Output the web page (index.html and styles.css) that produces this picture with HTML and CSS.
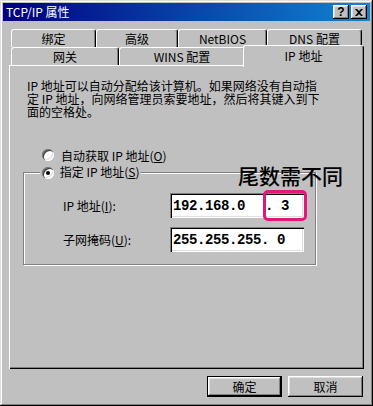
FILE: index.html
```html
<!DOCTYPE html>
<html lang="zh-CN">
  <head>
    <meta charset="UTF-8" />
    <title>TCP/IP 属性</title>
    <link rel="stylesheet" href="styles.css">
  </head>
  <body>
    <div class="window">
      <div class="titlebar">
        <span class="title">TCP/IP 属性</span>
        <div class="title-buttons">
          <span class="tbtn help">?</span>
          <span class="tbtn close">
            <svg width="8" height="7" viewBox="0 0 8 7">
              <path d="M0 0h2l2 2 2-2h2L5 3.5 8 7H6L4 5 2 7H0l3-3.5z" fill="#000" />
            </svg>
          </span>
        </div>
      </div>

      <div class="tabs">
        <div class="tab-row">
          <div class="tab t-bind">绑定</div>
          <div class="tab t-adv">高级</div>
          <div class="tab t-netbios">NetBIOS</div>
          <div class="tab t-dns">DNS 配置</div>
        </div>
        <div class="tab-row">
          <div class="tab t-gate">网关</div>
          <div class="tab t-wins">WINS 配置</div>
          <div class="tab t-ip active">IP 地址</div>
        </div>
      </div>

      <div class="panel">
        <p class="desc">IP 地址可以自动分配给该计算机。如果网络没有自动指<br>定 IP 地址，向网络管理员索要地址，然后将其键入到下<br>面的空格处。</p>

        <div class="radio-row">
          <span class="radio"></span>
          <span>自动获取 IP 地址(<u>O</u>)</span>
        </div>

        <fieldset class="group">
          <legend>
            <span class="radio checked"></span>
            <span>指定 IP 地址(<u>S</u>)</span>
          </legend>
          <div class="group-body">
            <div class="field-row">
              <span class="field-label">IP 地址(<u>I</u>):</span>
              <div class="ipbox">
                <span class="ip-text">192.168.0</span>
                <span class="ip-text last">. 3</span>
                <span class="mark"></span>
              </div>
            </div>
            <div class="field-row">
              <span class="field-label">子网掩码(<u>U</u>):</span>
              <div class="ipbox">
                <span class="ip-text">255.255.255. 0</span>
              </div>
            </div>
          </div>
        </fieldset>

        <div class="note">尾数需不同</div>
      </div>

      <div class="buttons">
        <button class="btn default">确定</button>
        <button class="btn">取消</button>
      </div>
    </div>
  </body>
</html>
```

FILE: styles.css
```css
* {
  box-sizing: border-box;
}

body {
  margin: 0;
  background-color: #c0c0c0;
  font-family: "Noto Sans CJK SC", sans-serif;
  font-size: 12px;
  color: #000;
}

.window {
  width: 373px;
  height: 406px;
  padding: 3px;
  display: flex;
  flex-direction: column;
  background-color: #c0c0c0;
  box-shadow: inset -1px -1px #000, inset 1px 1px #dfdfdf,
    inset -2px -2px #808080, inset 2px 2px #fff;
}

.titlebar {
  height: 18px;
  flex-shrink: 0;
  display: flex;
  align-items: center;
  justify-content: space-between;
  padding: 0 3px 0 3px;
  background: linear-gradient(to right, #000080, #1084d0);
  color: #fff;
}

.title {
  line-height: 18px;
}

.title-buttons {
  display: flex;
  gap: 2px;
}

.tbtn {
  width: 16px;
  height: 14px;
  display: flex;
  align-items: center;
  justify-content: center;
  background-color: #c0c0c0;
  color: #000;
  font-family: "Liberation Sans", sans-serif;
  font-weight: bold;
  font-size: 12px;
  box-shadow: inset -1px -1px #000, inset 1px 1px #fff,
    inset -2px -2px #808080, inset 2px 2px #dfdfdf;
}

/* tabs */

.tabs {
  margin: 8px 0 0 8px;
  position: relative;
  z-index: 1;
}

.tab-row {
  display: flex;
  height: 18px;
}

.tab {
  height: 18px;
  display: flex;
  align-items: center;
  justify-content: center;
  background-color: #c0c0c0;
  border: 1px solid;
  border-color: #fff #000 transparent #fff;
  border-bottom: none;
  border-radius: 3px 3px 0 0;
  box-shadow: inset -1px 0 #808080;
}

.t-bind { width: 85px; }
.t-adv { width: 82px; }
.t-netbios { width: 89px; }
.t-dns { width: 95px; }
.t-gate { width: 108px; }
.t-wins { width: 126px; }

.tab.active {
  width: 121px;
  height: 22px;
  margin-top: -2px;
  margin-left: -2px;
  padding-bottom: 2px;
}

/* page */

.panel {
  position: relative;
  height: 304px;
  margin: 0 6px;
  padding: 14px 0 0 18px;
  box-shadow: inset 1px 1px #fff, inset -1px -1px #000,
    inset -2px -2px #808080;
}

.desc {
  margin: 0;
  line-height: 13px;
}

.radio-row {
  display: flex;
  align-items: center;
  gap: 7px;
  height: 14px;
  margin: 30px 0 0 15px;
}

.radio {
  display: inline-block;
  width: 12px;
  height: 12px;
  border-radius: 50%;
  background-color: #fff;
  position: relative;
  box-shadow: inset 1px 1px #808080, inset 2px 2px #404040,
    inset -1px -1px #fff, inset -2px -2px #dfdfdf;
}

.radio.checked::after {
  content: "";
  position: absolute;
  left: 4px;
  top: 4px;
  width: 4px;
  height: 4px;
  border-radius: 50%;
  background-color: #000;
}

.group {
  width: 293px;
  margin: 3px 0 0 -4px;
  padding: 0;
  border: 1px solid #808080;
  box-shadow: inset 1px 1px #fff, 1px 1px #fff;
}

.group legend {
  margin-left: 16px;
  padding: 0 2px;
  line-height: 14px;
  background-color: #c0c0c0;
}

.group legend .radio {
  vertical-align: -2px;
  margin-right: 3px;
}

.group-body {
  padding: 14px 0 12px 39px;
}

.field-row {
  display: flex;
  align-items: center;
}

.field-row + .field-row {
  margin-top: 9px;
}

.field-label {
  width: 107px;
}

.ipbox {
  position: relative;
  width: 134px;
  height: 25px;
  display: flex;
  align-items: center;
  padding-left: 3px;
  background-color: #fff;
  box-shadow: inset 1px 1px #808080, inset 2px 2px #000,
    inset -1px -1px #fff, inset -2px -2px #dfdfdf;
}

.ip-text {
  white-space: pre;
  font-family: "Liberation Mono", monospace;
  font-weight: bold;
  font-size: 14px;
  letter-spacing: -0.4px;
}

.ip-text.last {
  margin-left: 20px;
}

.mark {
  position: absolute;
  left: 93px;
  top: -3px;
  right: -3px;
  bottom: -3px;
  border: 3px solid #e2177b;
  border-radius: 5px;
}

.note {
  position: absolute;
  left: 229px;
  top: 100px;
  font-size: 21px;
  font-weight: 500;
  line-height: 21px;
}

/* bottom buttons */

.buttons {
  display: flex;
  justify-content: flex-end;
  gap: 6px;
  margin: 7px 7px 0 0;
}

.btn {
  width: 75px;
  height: 21px;
  padding: 0;
  border: none;
  background-color: #c0c0c0;
  font-family: inherit;
  font-size: 12px;
  color: #000;
  box-shadow: inset -1px -1px #000, inset 1px 1px #fff,
    inset -2px -2px #808080, inset 2px 2px #dfdfdf;
}

.btn.default {
  border: 1px solid #000;
}
```
